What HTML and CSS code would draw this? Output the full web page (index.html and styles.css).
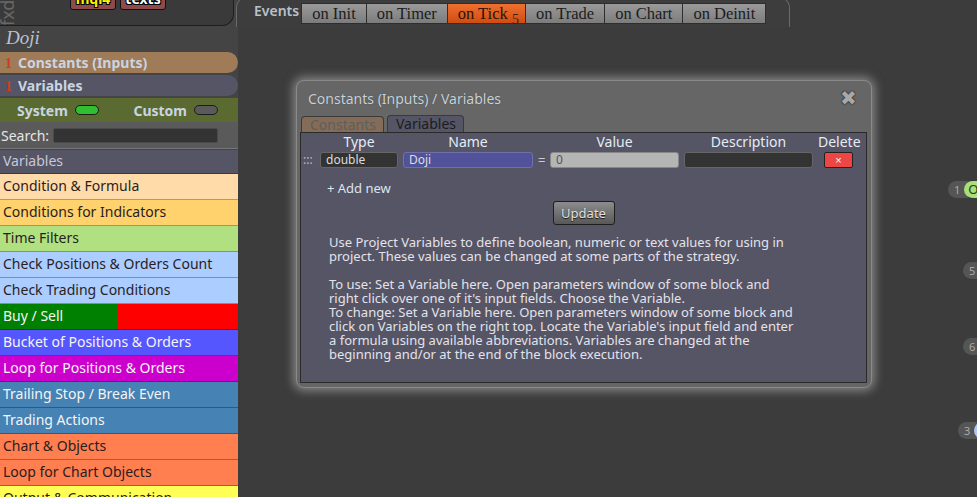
FILE: index.html
```html
<!DOCTYPE html>
<html lang="en">
<head>
    <meta charset="UTF-8">
    <title>fxDreema - Doji</title>
    <link rel="stylesheet" href="styles.css">
</head>
<body>
    <div class="app">
        <!-- Left panel: project + block list -->
        <aside class="sidebar">
            <div class="brand">
                <span class="brand-tab">fxd</span>
                <span class="top-btn btn-mql">mql4</span>
                <span class="top-btn btn-texts">texts</span>
            </div>
            <div class="project-name">Doji</div>

            <div class="pill pill-const"><span class="count">1</span>Constants (Inputs)</div>
            <div class="pill pill-vars"><span class="count">1</span>Variables</div>

            <div class="switches">
                <span class="switch">System <span class="toggle toggle-on"></span></span>
                <span class="switch">Custom <span class="toggle"></span></span>
            </div>

            <div class="search">
                <label for="searchBlocks">Search:</label>
                <input type="text" id="searchBlocks" class="search-input">
            </div>

            <ul class="blocks">
                <li class="block cat-vars">Variables</li>
                <li class="block cat-formula">Condition &amp; Formula</li>
                <li class="block cat-indicators">Conditions for Indicators</li>
                <li class="block cat-time">Time Filters</li>
                <li class="block cat-check">Check Positions &amp; Orders Count</li>
                <li class="block cat-check">Check Trading Conditions</li>
                <li class="block cat-buysell">Buy / Sell</li>
                <li class="block cat-bucket">Bucket of Positions &amp; Orders</li>
                <li class="block cat-loop">Loop for Positions &amp; Orders</li>
                <li class="block cat-trade">Trailing Stop / Break Even</li>
                <li class="block cat-trade">Trading Actions</li>
                <li class="block cat-chart">Chart &amp; Objects</li>
                <li class="block cat-chart">Loop for Chart Objects</li>
                <li class="block cat-output">Output &amp; Communication</li>
            </ul>
        </aside>

        <!-- Workspace: events tabs + block canvas -->
        <main class="workspace">
            <div class="events">
                <span class="events-label">Events</span>
                <div class="event-tabs">
                    <span class="event-tab">on Init</span>
                    <span class="event-tab">on Timer</span>
                    <span class="event-tab event-active">on Tick <sub>5</sub></span>
                    <span class="event-tab">on Trade</span>
                    <span class="event-tab">on Chart</span>
                    <span class="event-tab">on Deinit</span>
                </div>
            </div>

            <!-- blocks on the canvas -->
            <div class="node node-1"><span class="port">1</span><span class="node-body body-green">O</span></div>
            <div class="node node-5"><span class="port">5</span></div>
            <div class="node node-6"><span class="port">6</span></div>
            <div class="node node-3"><span class="port">3</span><span class="node-body body-blue"></span></div>

            <!-- Constants / Variables dialog -->
            <div class="dialog">
                <div class="dialog-head">
                    <span class="dialog-title">Constants (Inputs) / Variables</span>
                    <span class="dialog-close">&#10006;</span>
                </div>

                <div class="dialog-tabs">
                    <span class="dtab">Constants</span>
                    <span class="dtab dtab-active">Variables</span>
                </div>

                <div class="dialog-panel">
                    <div class="var-grid var-head">
                        <span></span>
                        <span>Type</span>
                        <span>Name</span>
                        <span></span>
                        <span>Value</span>
                        <span>Description</span>
                        <span>Delete</span>
                    </div>
                    <div class="var-grid var-row">
                        <span class="handle">:::</span>
                        <input class="field field-type" type="text" value="double">
                        <input class="field field-name" type="text" value="Doji">
                        <span class="eq">=</span>
                        <input class="field field-value" type="text" value="0">
                        <input class="field field-desc" type="text" value="">
                        <button class="btn-delete">&times;</button>
                    </div>

                    <div class="add-new">+ Add new</div>

                    <div class="update-wrap">
                        <button class="btn-update">Update</button>
                    </div>

                    <div class="help">
                        <p>Use Project Variables to define boolean, numeric or text values for using in project. These values can be changed at some parts of the strategy.</p>
                        <p>To use: Set a Variable here. Open parameters window of some block and right click over one of it's input fields. Choose the Variable.<br>
                        To change: Set a Variable here. Open parameters window of some block and click on Variables on the right top. Locate the Variable's input field and enter a formula using available abbreviations. Variables are changed at the beginning and/or at the end of the block execution.</p>
                    </div>
                </div>
            </div>
        </main>
    </div>
</body>
</html>
```

FILE: styles.css
```css
* {
    margin: 0;
    padding: 0;
    box-sizing: border-box;
}

body {
    font-family: 'Noto Sans', 'Open Sans', sans-serif;
    background-color: #3c3c3c;
    color: #ddd;
    width: 977px;
    height: 497px;
    overflow: hidden;
}

.app {
    display: flex;
    height: 497px;
}

/* Sidebar */
.sidebar {
    width: 238px;
    flex-shrink: 0;
    background: #444;
    display: flex;
    flex-direction: column;
    overflow: hidden;
}

.sidebar > * {
    flex-shrink: 0;
}

.brand {
    width: 234px;
    height: 26px;
    background: #3a3a3a;
    border-right: 1px solid #1e1e1e;
    border-bottom: 1px solid #1e1e1e;
    border-bottom-right-radius: 12px;
    display: flex;
    align-items: flex-start;
    overflow: hidden;
}

.brand-tab {
    writing-mode: vertical-rl;
    transform: rotate(180deg);
    font-size: 18px;
    line-height: 15px;
    color: #686868;
    width: 15px;
    margin-top: -8px;
    height: 34px;
    text-align: left;
}

.top-btn {
    margin-top: -10px;
    height: 20px;
    width: 46px;
    background: #8e4b4b;
    border: 1px solid #111;
    border-radius: 0 0 3px 3px;
    font-weight: bold;
    font-size: 14px;
    text-align: center;
    line-height: 16px;
    text-shadow: -1px -1px 0 #000, 1px -1px 0 #000, -1px 1px 0 #000, 1px 1px 0 #000;
}

.btn-mql {
    margin-left: 55px;
    color: #ffef00;
}

.btn-texts {
    margin-left: 4px;
    color: #fff;
}

.project-name {
    font-family: 'Liberation Serif', serif;
    font-style: italic;
    font-size: 19px;
    color: #b9c2d3;
    padding: 0 0 0 6px;
    height: 26px;
    line-height: 24px;
}

.pill {
    height: 21px;
    margin-bottom: 2px;
    border-radius: 0 11px 11px 0;
    font-weight: bold;
    font-size: 14px;
    line-height: 21px;
    color: #c9d5e2;
    padding-left: 5px;
}

.pill .count {
    font-family: 'Liberation Serif', serif;
    color: #c8401e;
    font-size: 14px;
    margin-right: 6px;
}

.pill-const {
    background: #a07b58;
}

.pill-vars {
    background: #555566;
}

.switches {
    height: 24px;
    background: #5b6a31;
    display: flex;
    justify-content: space-between;
    align-items: center;
    padding: 0 20px 0 17px;
    font-weight: bold;
    font-size: 14px;
    color: #c9d5e2;
}

.switch {
    display: flex;
    align-items: center;
    gap: 7px;
}

.toggle {
    width: 24px;
    height: 10px;
    border-radius: 6px;
    background: #5a5a5a;
    border: 1px solid #1c1c1c;
}

.toggle-on {
    background: #2fbf2f;
}

.search {
    height: 27px;
    background: #5a5a5a;
    border-bottom: 1px solid #777;
    display: flex;
    align-items: center;
    padding-left: 1px;
    font-size: 14px;
    color: #e6e6e6;
}

.search-input {
    margin-left: 4px;
    width: 165px;
    height: 15px;
    background: #333;
    border: 1px solid #4a4a4a;
    border-radius: 2px;
    outline: none;
}

.blocks {
    list-style: none;
    margin-top: 1px;
}

.block {
    height: 26px;
    line-height: 24px;
    padding-left: 3px;
    font-size: 14px;
    border-bottom: 1px solid rgba(0, 0, 0, 0.3);
    color: #2a1d1d;
    white-space: nowrap;
}

.cat-vars      { background: #555566; color: #c8c8d8; height: 24px; line-height: 22px; }
.cat-formula   { background: #ffdba9; }
.cat-indicators{ background: #ffd26e; }
.cat-time      { background: #b0e080; }
.cat-check     { background: #abcdff; }
.cat-buysell   { background: linear-gradient(90deg, #008000 0, #008000 117px, #ff0000 117px); color: #f4f4f4; }
.cat-bucket    { background: #5656ff; color: #f4f4f4; }
.cat-loop      { background: #cc00cc; color: #f4f4f4; }
.cat-trade     { background: #4682b4; color: #f4f4f4; }
.cat-chart     { background: #ff7f50; }
.cat-output    { background: #ffff55; }

/* Workspace */
.workspace {
    flex: 1;
    position: relative;
    background: #3c3c3c;
}

.events {
    margin-left: -2px;
    margin-top: -4px;
    width: 554px;
    height: 31px;
    border: 1px solid #6a6a6a;
    border-bottom: none;
    border-radius: 12px 12px 0 0;
    background: #3d3d3d;
    display: flex;
    align-items: flex-start;
    padding: 6px 0 0 17px;
}

.events-label {
    font-size: 14px;
    font-weight: 600;
    color: #b9c1cb;
    margin-right: 2px;
    line-height: 18px;
    margin-top: -1px;
}

.event-tabs {
    display: flex;
    gap: 1px;
    background: #2e2e2e;
    border: 1px solid #2e2e2e;
}

.event-tab {
    height: 19px;
    line-height: 19px;
    padding: 0 10px;
    font-family: 'Liberation Serif', serif;
    font-size: 16.5px;
    color: #1c1c1c;
    background: linear-gradient(#9a9a9a, #7c7c7c);
    white-space: nowrap;
}

.event-active {
    background: linear-gradient(#ee7030, #d04c10);
    color: #2a1408;
    padding-right: 6px;
}

.event-active sub {
    font-size: 14px;
    color: #3a2012;
    vertical-align: -5px;
    line-height: 0;
}

/* Canvas nodes */
.node {
    position: absolute;
    display: flex;
    height: 17px;
}

.port {
    background: #555;
    color: #aaa;
    font-size: 11px;
    line-height: 17px;
    padding: 0 8px 0 6px;
    border-radius: 9px 0 0 9px;
}

.node-body {
    width: 20px;
    border-radius: 9px 0 0 9px;
    margin-left: -4px;
    font-size: 13px;
    line-height: 17px;
    color: #2c3a20;
    padding-left: 4px;
}

.body-green { background: #a8df78; }
.body-blue  { background: #a9c8ff; }

.node-1 { left: 710px; top: 181px; }
.node-5 { left: 725px; top: 262px; }
.node-6 { left: 725px; top: 338px; }
.node-3 { left: 720px; top: 422px; }

.node-5 .port,
.node-6 .port {
    padding-right: 12px;
}

/* Dialog */
.dialog {
    position: absolute;
    left: 58px;
    top: 80px;
    width: 576px;
    height: 308px;
    background: #666;
    border: 1px solid #8a8a8a;
    border-radius: 8px;
    box-shadow: 0 0 10px 3px rgba(190, 190, 190, 0.55);
    padding: 0 4px 4px 3px;
    display: flex;
    flex-direction: column;
}

.dialog-head {
    height: 34px;
    display: flex;
    justify-content: space-between;
    align-items: center;
    padding: 0 10px 0 8px;
}

.dialog-title {
    font-size: 14px;
    color: #c9d1d9;
    text-shadow: 0 0 1px rgba(0, 0, 0, 0.4);
}

.dialog-close {
    font-size: 20px;
    line-height: 20px;
    color: #a8a8a8;
    text-shadow: 0 0 2px #222, 0 0 1px #222;
}

.dialog-tabs {
    display: flex;
    align-items: flex-end;
    gap: 3px;
    padding-left: 1px;
    height: 17px;
}

.dtab {
    height: 16px;
    padding: 0 7px 0 8px;
    border-radius: 4px 4px 0 0;
    border: 1px solid #3a3a3a;
    border-bottom: none;
    font-size: 14px;
    line-height: 16px;
    color: #5e5e5e;
    background: #846c58;
}

.dtab-active {
    height: 17px;
    background: #555566;
    color: #1c1c1c;
}

.dialog-panel {
    flex: 1;
    background: #555566;
    border: 1px solid #2a2a2a;
}

.var-grid {
    display: grid;
    grid-template-columns: 14px 78px 130px 7px 129px 129px 41px;
    column-gap: 5px;
    align-items: center;
}

.var-head {
    height: 17px;
    font-size: 14px;
    line-height: 17px;
    color: #e4ecf4;
    text-align: center;
}

.var-row {
    height: 19px;
    font-size: 12px;
}

.handle {
    color: #bbb;
    font-size: 12px;
    padding-left: 2px;
}

.eq {
    color: #ccc;
    font-size: 13px;
    text-align: left;
}

.field {
    height: 16px;
    width: 100%;
    border-radius: 3px;
    border: 1px solid #666;
    font-family: 'Noto Sans', sans-serif;
    font-size: 12px;
    padding: 0 5px;
    outline: none;
    color: #ddd;
    background: #333;
}

.field-name {
    background: #52529a;
    border-color: #7070a8;
}

.field-value {
    background: #b5b5b5;
    color: #555;
    border-color: #888;
}

.btn-delete {
    justify-self: center;
    width: 29px;
    height: 16px;
    background: #ee4545;
    border: 1px solid #222;
    border-radius: 2px;
    color: #fff;
    font-size: 11px;
    line-height: 12px;
}

.add-new {
    font-size: 13px;
    color: #dde4ee;
    padding: 10px 0 0 26px;
    height: 32px;
}

.update-wrap {
    text-align: center;
}

.btn-update {
    width: 62px;
    height: 24px;
    background: linear-gradient(#8c8c8c, #585858);
    border: 1px solid #1e1e1e;
    border-radius: 3px;
    color: #e2e2e2;
    font-family: 'Noto Sans', sans-serif;
    font-size: 13px;
    text-shadow: 0 1px 1px #111;
}

.help {
    padding: 10px 66px 0 28px;
    font-size: 13px;
    line-height: 14px;
    color: #e4e2ea;
}

.help p {
    margin-bottom: 14px;
}
```
